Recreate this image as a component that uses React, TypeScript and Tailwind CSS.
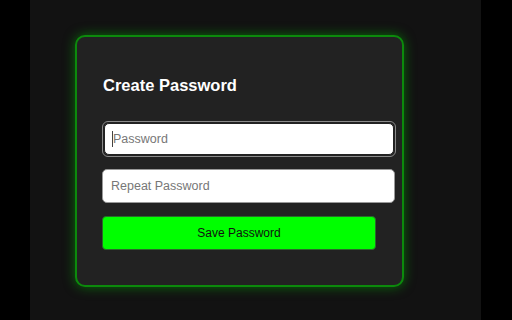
export default function App() {
  return (
    <div className="flex h-[320px] w-[512px] bg-black font-['Liberation_Sans',Arial,sans-serif]">
      <div className="ml-[30px] h-full w-[451px] bg-[#121212] pl-[45px] pt-[35px]">
        <div className="h-[252px] w-[329px] rounded-[10px] border-2 border-[#0c8a0c] bg-[#222222] px-[25px] pt-[36px] shadow-[0_0_12px_rgba(0,200,0,0.5)]">
          <h2 className="pl-px text-[16.5px] font-bold leading-[24px] text-white">Create Password</h2>

          <div className="mt-[24px] flex flex-col">
            <div className="w-[294px] rounded-[6px] border border-[#8a8a8a] p-px">
              <div className="flex h-[32px] items-center rounded-[5px] border border-[#222] bg-white pl-[7px] text-[12.5px] text-[#777]">
                <span className="h-[16px] w-px bg-[#444]" />
                <span>Password</span>
              </div>
            </div>

            <div className="mt-[12px] flex h-[34px] w-[293px] items-center rounded-[5px] border border-[#999] bg-white pl-[8px] text-[12.5px] text-[#777]">
              Repeat Password
            </div>

            <button className="mt-[13px] flex h-[34px] w-[274px] items-center justify-center rounded-[4px] border border-[#2a6a2a] bg-[#00ff00] text-[12px] text-[#111]">
              Save Password
            </button>
          </div>
        </div>
      </div>
    </div>
  );
}
